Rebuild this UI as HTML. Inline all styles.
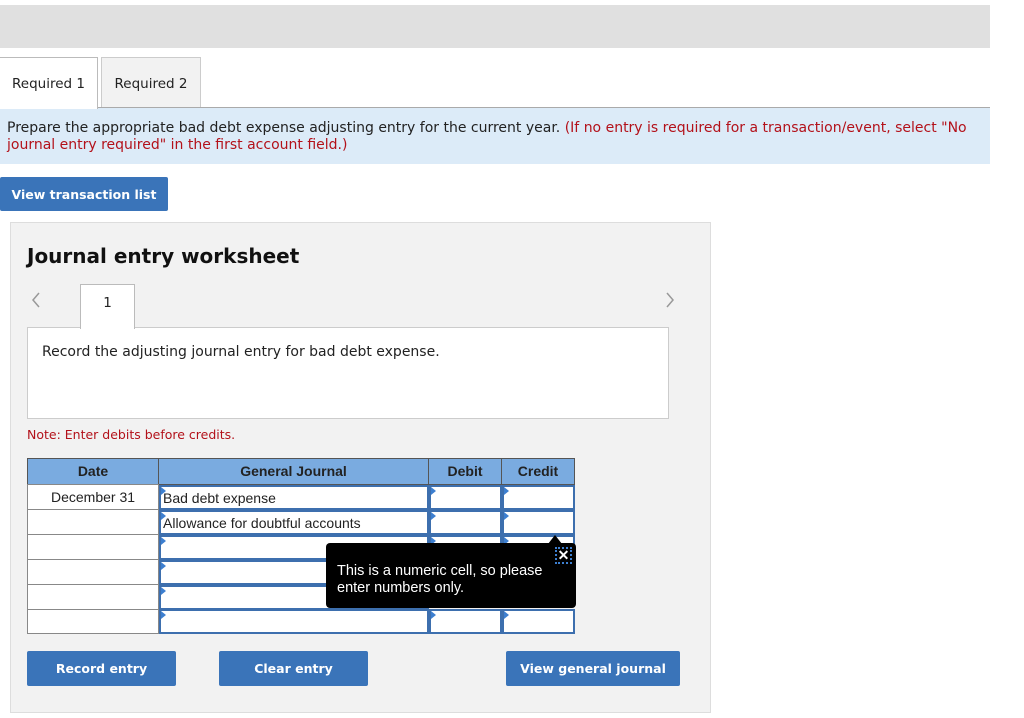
<!DOCTYPE html>
<html><head><style>
*{margin:0;padding:0;box-sizing:border-box}
body{width:1024px;height:718px;background:#fff;position:relative;overflow:hidden;font-family:"DejaVu Sans","Liberation Sans",sans-serif;color:#222}
.a{position:absolute}
.btn{position:absolute;background:#3a74b9;color:#fff;font-weight:bold;font-size:12.5px;text-align:center;border-radius:2px}
.cell{position:absolute;background:#fff;border:2px solid #3d6fae;font-family:"Liberation Sans",sans-serif;font-size:14px}
.cell:before{content:"";position:absolute;left:0;top:0;border-top:4px solid transparent;border-bottom:4px solid transparent;border-left:5px solid #3d7fd0}
.dc{position:absolute;background:#fff;border:1px solid #888;font-family:"Liberation Sans",sans-serif;font-size:14px;text-align:center}
.h{position:absolute;background:#7aabe0;border:1px solid #555;font-family:"Liberation Sans",sans-serif;font-weight:bold;font-size:14px;text-align:center;line-height:25px}
</style></head><body>
<div class="a" style="left:0;top:5px;width:990px;height:43px;background:#e0e0e0"></div>
<div class="a" style="left:0;top:57px;width:98px;height:52px;background:#fff;border:1px solid #bbb;border-bottom:none;border-left:none;font-size:13.5px;line-height:52px;text-align:center;z-index:2">Required 1</div>
<div class="a" style="left:101px;top:57px;width:100px;height:51px;background:#f2f2f2;border:1px solid #ccc;font-size:13.5px;line-height:52px;text-align:center">Required 2</div>
<div class="a" style="left:0;top:107px;width:990px;height:57px;background:#dcebf8;border-top:1px solid #aaa;font-size:14px;line-height:17px;padding:12px 8px 0 7px">Prepare the appropriate bad debt expense adjusting entry for the current year. <span style="color:#b3111a">(If no entry is required for a transaction/event, select "No journal entry required" in the first account field.)</span></div>
<div class="btn" style="left:0;top:177px;width:168px;height:34px;line-height:35px">View transaction list</div>
<div class="a" style="left:10px;top:222px;width:701px;height:491px;background:#f2f2f2;border:1px solid #ddd"></div>
<div class="a" style="left:27px;top:244px;font-size:20px;font-weight:bold;color:#111">Journal entry worksheet</div>
<svg class="a" style="left:30px;top:291px" width="12" height="18"><path d="M9 2 L3 9 L9 16" fill="none" stroke="#999" stroke-width="1.5"/></svg>
<svg class="a" style="left:664px;top:291px" width="12" height="18"><path d="M3 2 L9 9 L3 16" fill="none" stroke="#999" stroke-width="1.5"/></svg>
<div class="a" style="left:27px;top:327px;width:642px;height:92px;background:#fff;border:1px solid #ccc"></div>
<div class="a" style="left:80px;top:284px;width:55px;height:45px;background:#fff;border:1px solid #bbb;border-bottom:none;font-size:13.5px;text-align:center;line-height:36px">1</div>
<div class="a" style="left:42px;top:344px;font-size:14px">Record the adjusting journal entry for bad debt expense.</div>
<div class="a" style="left:27px;top:427px;font-size:12.5px;color:#b3111a">Note: Enter debits before credits.</div>
<div class="h" style="left:27px;top:458px;width:132px;height:27px">Date</div>
<div class="h" style="left:158px;top:458px;width:271px;height:27px">General Journal</div>
<div class="h" style="left:428px;top:458px;width:74px;height:27px">Debit</div>
<div class="h" style="left:501px;top:458px;width:74px;height:27px">Credit</div>
<div class="dc" style="left:27px;top:484px;width:132px;height:26px;line-height:24px">December 31</div>
<div class="dc" style="left:27px;top:509px;width:132px;height:26px"></div>
<div class="dc" style="left:27px;top:534px;width:132px;height:26px"></div>
<div class="dc" style="left:27px;top:559px;width:132px;height:26px"></div>
<div class="dc" style="left:27px;top:584px;width:132px;height:26px"></div>
<div class="dc" style="left:27px;top:609px;width:132px;height:25px"></div>
<div class="cell" style="left:159px;top:485px;width:270px;height:25px;line-height:22px;padding-left:2px">Bad debt expense</div>
<div class="cell" style="left:429px;top:485px;width:73px;height:25px"></div>
<div class="cell" style="left:502px;top:485px;width:73px;height:25px"></div>
<div class="cell" style="left:159px;top:510px;width:270px;height:25px;line-height:22px;padding-left:2px">Allowance for doubtful accounts</div>
<div class="cell" style="left:429px;top:510px;width:73px;height:25px"></div>
<div class="cell" style="left:502px;top:510px;width:73px;height:25px"></div>
<div class="cell" style="left:159px;top:535px;width:270px;height:25px"></div>
<div class="cell" style="left:429px;top:535px;width:73px;height:25px"></div>
<div class="cell" style="left:502px;top:535px;width:73px;height:25px"></div>
<div class="cell" style="left:159px;top:560px;width:270px;height:25px"></div>
<div class="cell" style="left:159px;top:585px;width:270px;height:25px"></div>
<div class="cell" style="left:159px;top:609px;width:270px;height:25px"></div>
<div class="cell" style="left:429px;top:609px;width:73px;height:25px"></div>
<div class="cell" style="left:502px;top:609px;width:73px;height:25px"></div>
<div class="a" style="left:326px;top:543px;width:250px;height:65px;background:#000;border-radius:4px;color:#fff;font-family:'Liberation Sans',sans-serif;font-size:14.5px;line-height:17px;padding:20px 0 0 11px"><div style="width:220px">This is a numeric cell, so please enter numbers only.</div></div>
<div class="a" style="left:548px;top:535px;width:0;height:0;border-left:7px solid transparent;border-right:7px solid transparent;border-bottom:9px solid #000"></div>
<div class="a" style="left:555px;top:547px;width:17px;height:17px;border:2px dotted #3d7fd0;color:#fff;font-family:'Liberation Sans',sans-serif;font-size:14px;font-weight:bold;text-align:center;line-height:13px">✕</div>
<div class="btn" style="left:27px;top:651px;width:149px;height:35px;line-height:36px">Record entry</div>
<div class="btn" style="left:219px;top:651px;width:149px;height:35px;line-height:36px">Clear entry</div>
<div class="btn" style="left:506px;top:651px;width:174px;height:35px;line-height:36px">View general journal</div>
</body></html>
